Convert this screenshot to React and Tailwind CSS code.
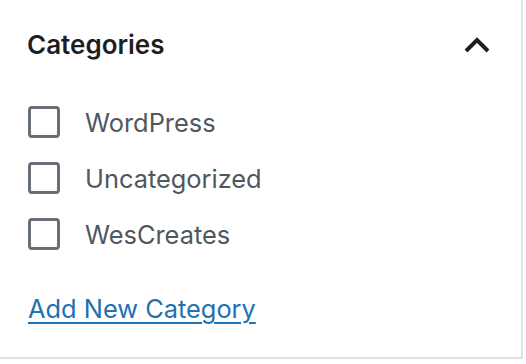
export default function App() {
  const items = ["WordPress", "Uncategorized", "WesCreates"];
  return (
    <div className="w-[526px] h-[364px] bg-white" style={{ fontFamily: "Inter, 'Noto Sans', sans-serif" }}>
      <div className="w-[523px] h-[359px] border-r-2 border-b-2 border-[#e0e0e0] bg-white">
        <div className="h-[90px] flex items-center justify-between pl-[27px] pr-[31px]">
          <span className="text-[26px] font-semibold text-[#1e1e1e] leading-none">Categories</span>
          <svg width="26" height="18" viewBox="0 0 26 18" fill="none">
            <path d="M2 15 L13 4 L24 15" stroke="#1e1e1e" strokeWidth="4" strokeLinejoin="miter" />
          </svg>
        </div>
        <div className="mt-[16px] flex flex-col gap-[24px] pl-[28px]">
          {items.map((t) => (
            <div key={t} className="h-[32px] flex items-center gap-[25px]">
              <div className="w-[32px] h-[32px] rounded-[4px] border-[3px] border-[#686f77] bg-white" />
              <span className="text-[25.4px] text-[#50575e] leading-none pt-[2px]">{t}</span>
            </div>
          ))}
        </div>
        <div className="pl-[28px] mt-[46px]">
          <a href="#" className="text-[25.4px] leading-none text-[#2271b1] underline underline-offset-[4px] decoration-2">Add New Category</a>
        </div>
      </div>
    </div>
  );
}
